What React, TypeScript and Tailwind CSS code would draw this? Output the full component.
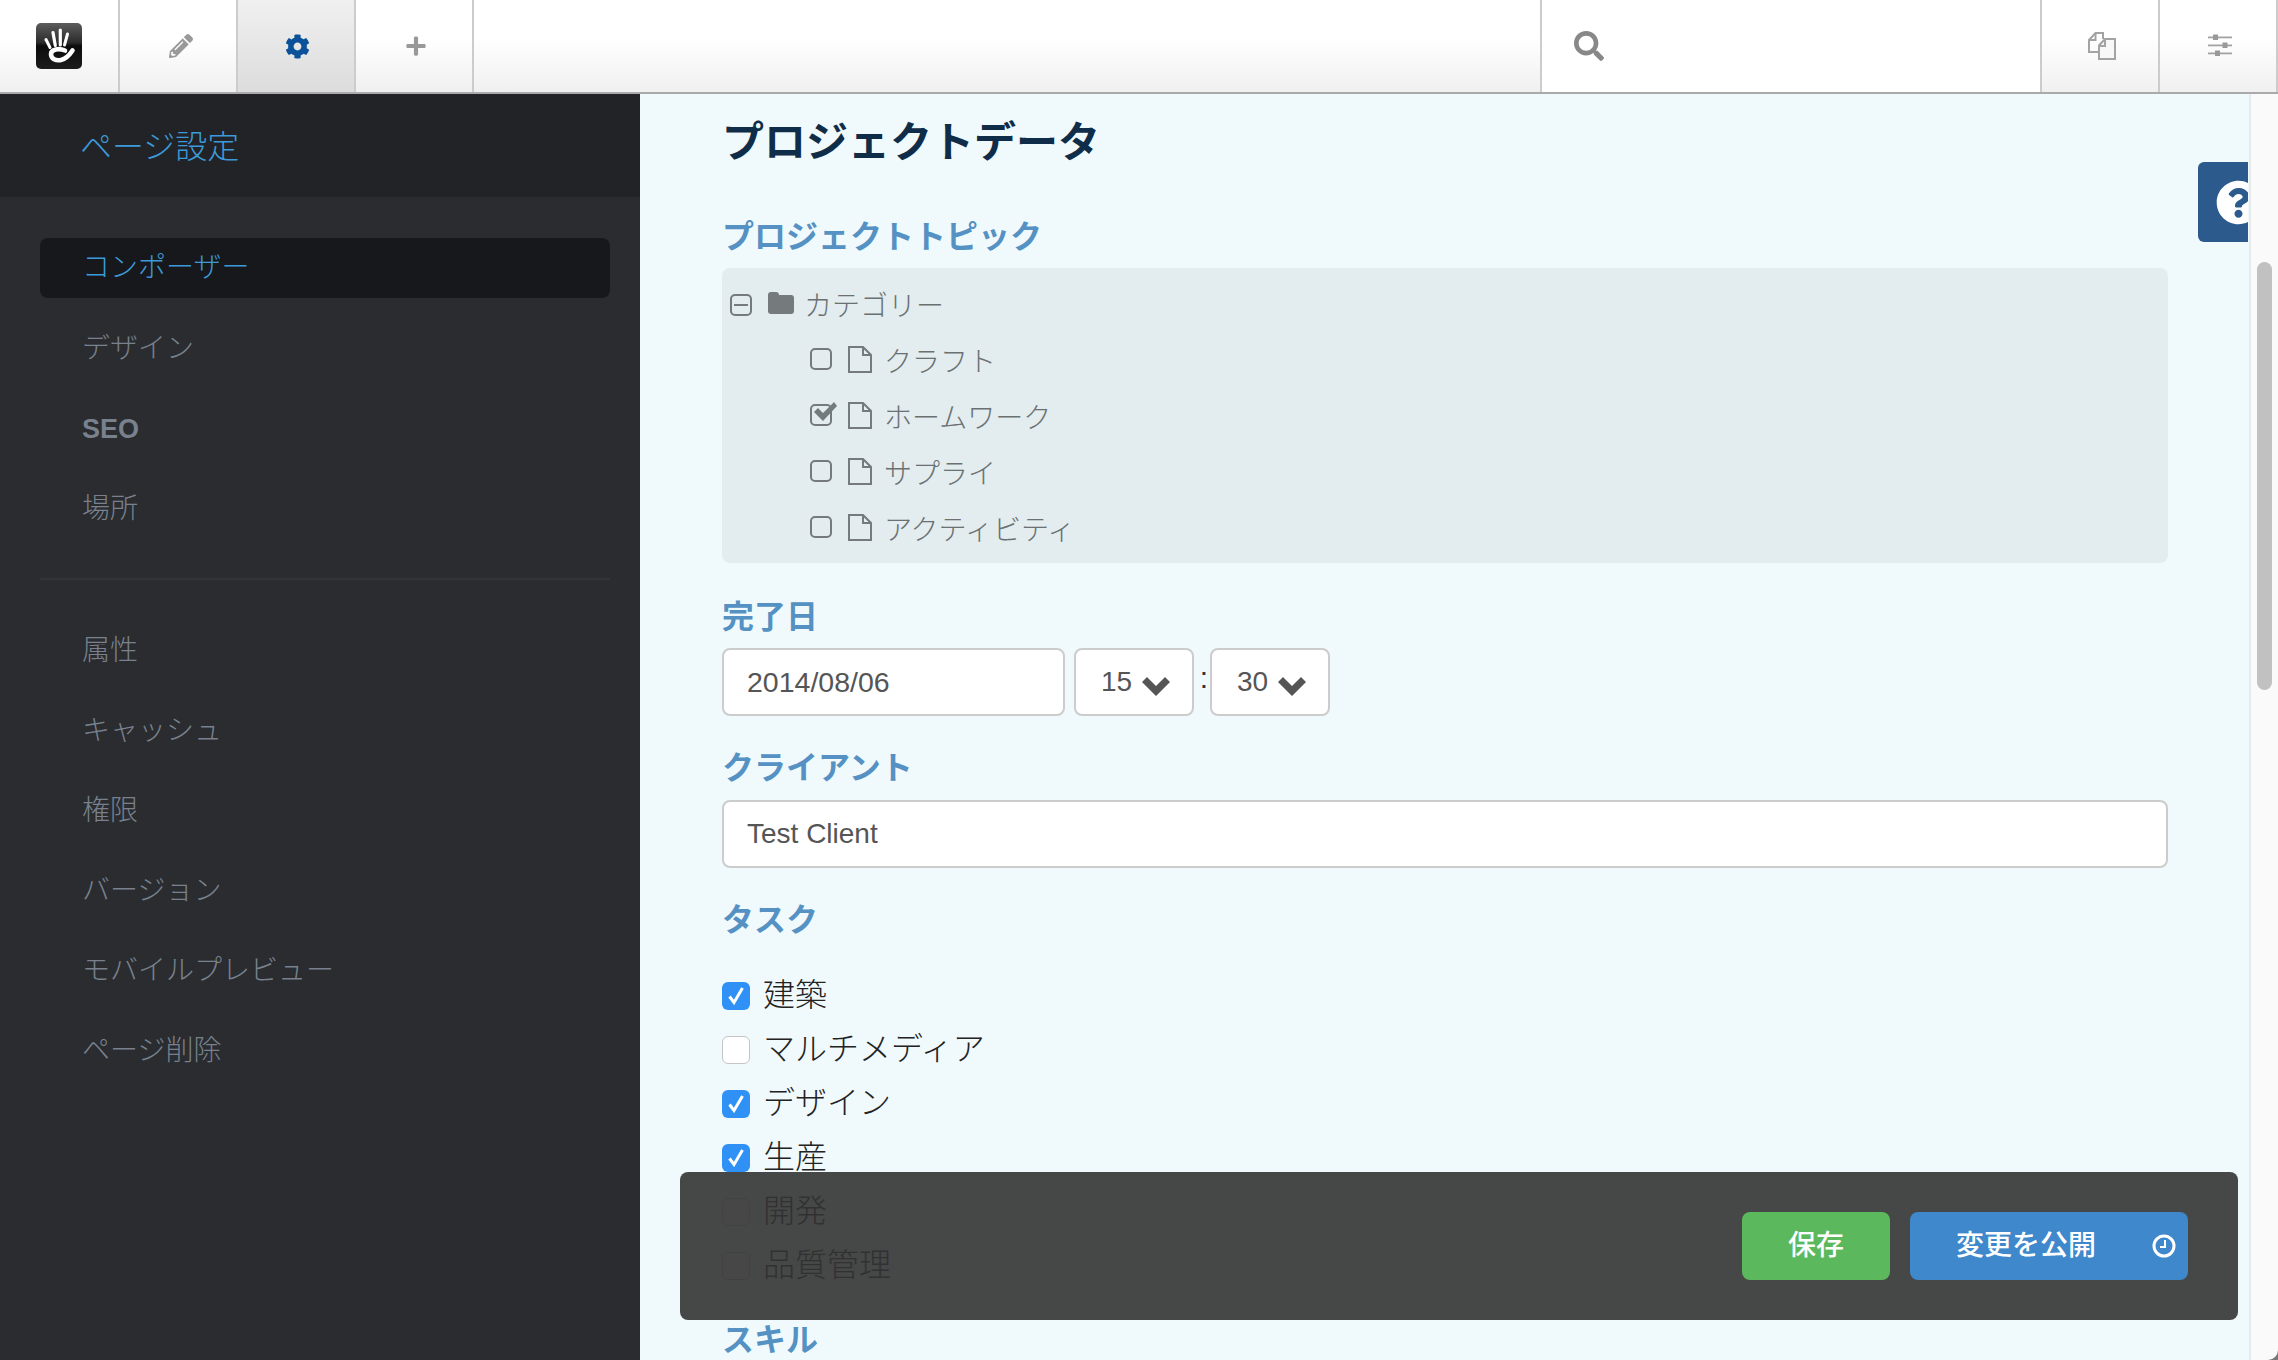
import type { ReactNode } from 'react';
import { FaCog, FaPencilAlt, FaPlus, FaQuestionCircle, FaSearch } from 'react-icons/fa';

const FONT = `font-['Liberation_Sans','Noto_Sans_CJK_JP',sans-serif]`;

function Logo() {
  return (
    <svg width="46" height="46" viewBox="0 0 46 46">
      <defs>
        <linearGradient id="logoBg" x1="0" y1="0" x2="0" y2="1">
          <stop offset="0" stopColor="#5c5c5c" />
          <stop offset="0.42" stopColor="#2c2c2c" />
          <stop offset="0.5" stopColor="#0c0c0c" />
          <stop offset="1" stopColor="#1c1c1c" />
        </linearGradient>
      </defs>
      <rect width="46" height="46" rx="5" fill="url(#logoBg)" />
      <g stroke="#fff" strokeLinecap="round" fill="none">
        <path d="M10 16.500l4 8" strokeWidth="3" />
        <path d="M17 9.500l2.300 13" strokeWidth="3.200" />
        <path d="M24.300 7v15" strokeWidth="3.200" />
        <path d="M31.500 11l-3 11" strokeWidth="3" />
        <path d="M29 27.500c-6-2.500-14-1.500-14 3.500 0 5 5 7 10 6 5-1 8.500-5 11.500-9.500" strokeWidth="4.600" />
      </g>
    </svg>
  );
}

function Pages() {
  return (
    <svg width="28" height="28" viewBox="0 0 28 28" fill="none" stroke="#a3a3a3" strokeWidth="2">
      <path d="M11 20H1V8L7.500 1H15v6" />
      <path d="M7.500 1v7H1" />
      <path d="M11 27V13.500L17 7h10v20z" fill="#f8f8f8" />
      <path d="M17 7v7h-6" />
    </svg>
  );
}

function Sliders() {
  return (
    <svg width="24" height="24" viewBox="0 0 24 24" fill="#a3a3a3">
      <rect y="2.500" width="24" height="1.800" />
      <rect x="5" y="0.500" width="5" height="5.500" fill="#999" />
      <rect y="10.500" width="24" height="1.800" />
      <rect x="14.500" y="8.500" width="5" height="5.500" fill="#999" />
      <rect y="18.500" width="24" height="1.800" />
      <rect x="7" y="16.500" width="5" height="5.500" fill="#999" />
    </svg>
  );
}

function Chevron() {
  return (
    <svg width="28" height="19" viewBox="0 0 28 19" fill="#555">
      <path d="M0 5l5-5 9 9 9-9 5 5-14 14z" />
    </svg>
  );
}

function Folder() {
  return (
    <svg width="26" height="22" viewBox="0 0 26 22" fill="#757b7d">
      <path d="M0 3a3 3 0 0 1 3-3h5a3 3 0 0 1 3 3h12a3 3 0 0 1 3 3v13a3 3 0 0 1-3 3H3a3 3 0 0 1-3-3z" />
    </svg>
  );
}

function Doc() {
  return (
    <svg width="24" height="27" viewBox="0 0 24 27" fill="none" stroke="#757b7d" strokeWidth="2">
      <path d="M1 1h14l8 8v17H1z" />
      <path d="M15 1v8h8" />
    </svg>
  );
}

function TreeCheck({ checked }: { checked?: boolean }) {
  return (
    <div className="relative w-[22px] h-[22px] border-2 border-[#757b7d] rounded-[5px] shrink-0">
      {checked && (
        <svg className="absolute left-[1px] top-[-5px]" width="24" height="22" viewBox="0 0 24 22" fill="#757b7d">
          <path d="M1 11l4-4 5 5L21 1l3 4-14 15z" />
        </svg>
      )}
    </div>
  );
}

function TreeRow({ label, checked }: { label: string; checked?: boolean }) {
  return (
    <div className="flex items-center h-[56px] pl-[88px]">
      <div className="flex items-center relative top-[-2px]">
        <TreeCheck checked={checked} />
        <div className="ml-[16px] mr-[12px] flex">
          <Doc />
        </div>
      </div>
      <span className="text-[28px] font-light text-[#6a7173] relative top-[2px]">{label}</span>
    </div>
  );
}

function FieldLabel({ children, className }: { children: ReactNode; className?: string }) {
  return <h3 className={`text-[32px] leading-[36px] font-semibold text-[#5591c3] ${className ?? ''}`}>{children}</h3>;
}

function Box({ checked }: { checked?: boolean }) {
  if (checked) {
    return (
      <div className="w-[28px] h-[28px] rounded-[6px] bg-[#2f90f5] flex items-center justify-center shrink-0">
        <svg width="16" height="18" viewBox="0 0 16 18" fill="none" stroke="#fff" strokeWidth="3">
          <path d="M1.500 9.500l4.500 6L14.500 1" />
        </svg>
      </div>
    );
  }
  return <div className="w-[28px] h-[28px] rounded-[6px] bg-white border border-[#c4c4c4] shrink-0" />;
}

function TaskRow({ label, checked }: { label: string; checked?: boolean }) {
  return (
    <div className="flex items-center h-[54px] gap-[13px]">
      <Box checked={checked} />
      <span className="text-[32px] font-light text-[#222] relative top-[-1px]">{label}</span>
    </div>
  );
}

function TimeSelect({ value }: { value: string }) {
  return (
    <div className="w-[120px] h-[68px] bg-white border-2 border-[#ccc] rounded-[8px] flex items-center pl-[25px] text-[28px] text-[#555]">
      <span>{value}</span>
      <span className="ml-[10px] mt-[8px] flex">
        <Chevron />
      </span>
    </div>
  );
}

const NAV_TOP = ['デザイン', 'SEO', '場所'];
const NAV_BOTTOM = ['属性', 'キャッシュ', '権限', 'バージョン', 'モバイルプレビュー', 'ページ削除'];

function Sidebar() {
  return (
    <aside className="w-[640px] shrink-0 bg-[#2a2c30] flex flex-col">
      <div className="h-[103px] bg-[#212327] flex items-center pl-[80px] pt-[2px] text-[32px] font-light text-[#3d9ad9]">
        ページ設定
      </div>
      <div className="pl-[40px] pr-[30px] pt-[41px]">
        <div className="h-[60px] rounded-[8px] bg-[#16181c] flex items-center pl-[42px] text-[28px] font-light text-[#3d9ad9]">
          コンポーザー
        </div>
        <div className="pt-[11px] pb-[29px] border-b-2 border-[#323438]">
          {NAV_TOP.map((item) => (
            <div
              key={item}
              className={`h-[80px] flex items-center pl-[42px] text-[#78818d] ${item === 'SEO' ? 'text-[27px] font-semibold' : 'text-[28px] font-light'}`}
            >
              {item}
            </div>
          ))}
        </div>
        <div className="pt-[31px]">
          {NAV_BOTTOM.map((item) => (
            <div key={item} className="h-[80px] flex items-center pl-[42px] text-[28px] font-light text-[#78818d]">
              {item}
            </div>
          ))}
        </div>
      </div>
    </aside>
  );
}

function Form() {
  return (
    <div className="flex-1 pl-[82px] pr-[81px] overflow-hidden bg-[#f0fafc]">
      <h1 className="h-[97px] flex items-center text-[42px] font-bold text-[#0f2d48]">プロジェクトデータ</h1>

      <FieldLabel className="mt-[28px] mb-[13px]">プロジェクトトピック</FieldLabel>
      <div className="bg-[#e3ecee] rounded-[8px] h-[295px] pt-[9px]">
        <div className="flex items-center h-[56px] pl-[8px]">
          <div className="w-[22px] h-[22px] border-2 border-[#757b7d] rounded-[5px] flex items-center justify-center shrink-0">
            <div className="w-[14px] h-[2px] bg-[#757b7d]" />
          </div>
          <div className="ml-[16px] mr-[10px] flex relative top-[-2px]">
            <Folder />
          </div>
          <span className="text-[28px] font-light text-[#6a7173] relative top-[2px]">カテゴリー</span>
        </div>
        <TreeRow label="クラフト" />
        <TreeRow label="ホームワーク" checked />
        <TreeRow label="サプライ" />
        <TreeRow label="アクティビティ" />
      </div>

      <FieldLabel className="mt-[36px] mb-[13px]">完了日</FieldLabel>
      <div className="flex items-center">
        <div className="w-[343px] h-[68px] bg-white border-2 border-[#ccc] rounded-[8px] flex items-center pl-[23px] text-[28.500px] text-[#555]">
          2014/08/06
        </div>
        <div className="ml-[9px]">
          <TimeSelect value="15" />
        </div>
        <span className="w-[16px] pl-[4px] text-center text-[30px] leading-none text-[#333] relative top-[-4px]">:</span>
        <TimeSelect value="30" />
      </div>

      <FieldLabel className="mt-[34px] mb-[14px]">クライアント</FieldLabel>
      <div className="h-[68px] bg-white border-2 border-[#ccc] rounded-[8px] flex items-center pl-[23px] text-[28px] text-[#555]">
        Test Client
      </div>

      <FieldLabel className="mt-[34px] mb-[31px]">タスク</FieldLabel>
      <div>
        <TaskRow label="建築" checked />
        <TaskRow label="マルチメディア" />
        <TaskRow label="デザイン" checked />
        <TaskRow label="生産" checked />
        <TaskRow label="開発" />
        <TaskRow label="品質管理" />
      </div>
      <FieldLabel className="mt-[29px]">スキル</FieldLabel>
    </div>
  );
}

export default function App() {
  return (
    <div className={`relative w-[2278px] h-[1360px] overflow-hidden bg-[#777] flex flex-col ${FONT}`}>
      {/* Toolbar */}
      <header className="h-[94px] shrink-0 flex border-b-2 border-[#aaa] bg-gradient-to-b from-white from-40% to-[#f0f0f0]">
        <div className="w-[120px] flex items-center justify-center border-r-2 border-[#ccc]">
          <Logo />
        </div>
        <div className="w-[118px] flex items-center justify-center border-r-2 border-[#ccc] pl-[5px]">
          <FaPencilAlt size={24} color="#999" />
        </div>
        <div className="w-[118px] flex items-center justify-center border-r-2 border-[#ccc] pl-[3px] bg-gradient-to-b from-[#f0f0f0] to-[#dcdcdc]">
          <FaCog size={25} color="#0a5199" />
        </div>
        <div className="w-[118px] flex items-center justify-center border-r-2 border-[#ccc] pl-[3px]">
          <FaPlus size={22} color="#999" />
        </div>
        <div className="flex-1 border-r-2 border-[#ccc]" />
        <div className="w-[500px] bg-white border-r-2 border-[#ccc] flex items-center pl-[32px]">
          <FaSearch size={30} color="#888" />
        </div>
        <div className="w-[118px] flex items-center justify-center border-r-2 border-[#ccc] pl-[4px]">
          <Pages />
        </div>
        <div className="w-[118px] flex items-center justify-center border-r-2 border-[#ccc] pl-[4px]">
          <Sliders />
        </div>
      </header>

      <main className="flex-1 flex min-h-0">
        <Sidebar />
        <Form />
        {/* Scrollbar */}
        <div className="w-[29px] shrink-0 bg-[#fafafa] border-l-2 border-[#e6eaea] pt-[168px] pl-[6px] rounded-br-[10px]">
          <div className="w-[15px] h-[428px] rounded-full bg-[#c1c1c1]" />
        </div>
      </main>

      {/* Help tab */}
      <div className="absolute left-[2198px] top-[162px] w-[50px] h-[80px] rounded-l-[6px] bg-[#2d5a8c] overflow-hidden flex items-center pl-[18px]">
        <FaQuestionCircle size={45} color="#fff" className="shrink-0" />
      </div>

      {/* Action bar */}
      <div className="absolute left-[680px] top-[1172px] w-[1558px] h-[148px] rounded-[8px] bg-[#333]/90 flex items-center justify-end pr-[50px] gap-[20px]">
        <button className="w-[148px] h-[68px] rounded-[8px] bg-[#5cb85c] text-white text-[28px] font-medium">保存</button>
        <button className="w-[278px] h-[68px] rounded-[8px] bg-[#3f88cc] text-white text-[28px] font-medium flex items-center pl-[46px]">
          変更を公開
          <svg className="ml-[56px]" width="24" height="24" viewBox="0 0 24 24" fill="none" stroke="#fff" strokeWidth="3">
            <circle cx="12" cy="12" r="10" />
            <path d="M13 6v7H8" strokeWidth="2" />
          </svg>
        </button>
      </div>
    </div>
  );
}
